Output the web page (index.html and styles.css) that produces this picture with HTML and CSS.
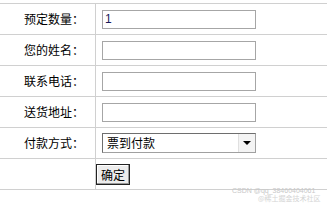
FILE: index.html
```html
<!DOCTYPE html>
<html lang="zh-CN">
<head>
    <meta charset="UTF-8">
    <title>订购信息</title>
    <link rel="stylesheet" href="styles.css">
</head>
<body>
    <table class="order-form">
        <tr>
            <td class="label">预定数量：</td>
            <td class="field"><input type="text" class="text-box" value="1"></td>
        </tr>
        <tr>
            <td class="label">您的姓名：</td>
            <td class="field"><input type="text" class="text-box"></td>
        </tr>
        <tr>
            <td class="label">联系电话：</td>
            <td class="field"><input type="text" class="text-box"></td>
        </tr>
        <tr>
            <td class="label">送货地址：</td>
            <td class="field"><input type="text" class="text-box"></td>
        </tr>
        <tr>
            <td class="label">付款方式：</td>
            <td class="field">
                <div class="select-box">
                    <select class="pay-select">
                        <option>票到付款</option>
                        <option>在线支付</option>
                    </select>
                    <span class="arrow"></span>
                </div>
            </td>
        </tr>
        <tr>
            <td class="label"></td>
            <td class="field"><button class="submit-btn">确定</button></td>
        </tr>
    </table>

    <div class="watermark">
        <span class="wm-top">CSDN @qq_38460404061</span>
        <span class="wm-bottom">@稀土掘金技术社区</span>
    </div>
</body>
</html>
```

FILE: styles.css
```css
body {
    margin: 0;
    background: #fff;
    font-family: "Noto Sans CJK SC", "DejaVu Sans", sans-serif;
    font-size: 12px;
    color: #000;
}
.order-form {
    width: 100%;
    margin-top: 3px;
    border-collapse: collapse;
    border-top: 1px solid #d0d0d0;
}
.order-form td {
    height: 30px;
    padding: 0;
    border-bottom: 1px solid #d0d0d0;
}
.order-form .label {
    width: 84px;
    padding-right: 11px;
    text-align: right;
    border-right: 1px solid #d0d0d0;
    line-height: 14px;
}
.order-form .field {
    vertical-align: middle;
}
.text-box {
    display: block;
    box-sizing: border-box;
    width: 154px;
    height: 19px;
    margin-left: 6px;
    padding: 0 2px;
    border: 1px solid #a6a6a6;
    font-family: "Liberation Sans", sans-serif;
    font-size: 12px;
    color: #1a1a5a;
    outline: none;
}
.select-box {
    position: relative;
    width: 154px;
    height: 20px;
    margin-left: 6px;
}
.pay-select {
    appearance: none;
    -webkit-appearance: none;
    box-sizing: border-box;
    width: 100%;
    height: 20px;
    padding: 0 0 0 4px;
    border: 1px solid #a0a0a0;
    border-top-color: #6e6e6e;
    border-left-color: #6e6e6e;
    background: #fff;
    font-family: "Noto Sans CJK SC", sans-serif;
    font-size: 12px;
    color: #000;
    line-height: 18px;
}
.arrow {
    position: absolute;
    top: 1px;
    right: 1px;
    width: 16px;
    height: 18px;
    background: #f4f4f4;
    border-left: 1px solid #e0e0e0;
}
.arrow::after {
    content: "";
    position: absolute;
    left: 4px;
    top: 7px;
    border-left: 4px solid transparent;
    border-right: 4px solid transparent;
    border-top: 4px solid #000;
}
.submit-btn {
    display: block;
    box-sizing: border-box;
    width: 34px;
    height: 21px;
    margin: 0;
    padding: 0;
    border: 1px solid #222;
    background: #ececec;
    box-shadow: inset -1px -1px 0 #999, inset 1px 1px 0 #fff;
    font-family: "Noto Sans CJK SC", sans-serif;
    font-size: 12px;
    color: #000;
}
.watermark {
    position: absolute;
    left: 232px;
    top: 187px;
    width: 95px;
    color: #c8c8c8;
    font-size: 7px;
    line-height: 7px;
}
.wm-top {
    display: block;
    font-family: "Liberation Sans", sans-serif;
}
.wm-bottom {
    display: block;
    margin-left: 26px;
    margin-top: 1px;
    color: #d4d4d4;
}
```
